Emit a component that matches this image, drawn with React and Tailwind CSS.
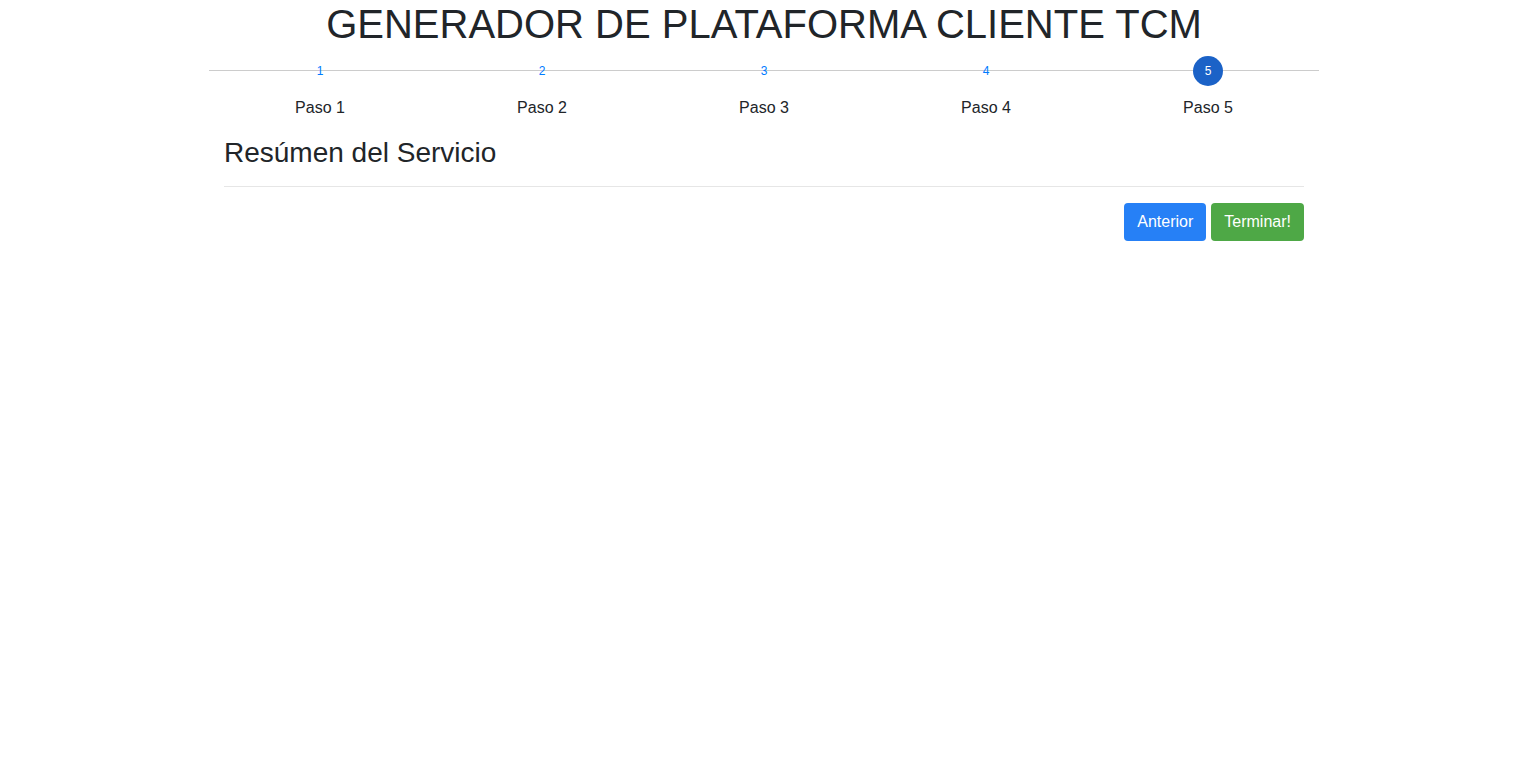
import React from "react";

const steps = [1, 2, 3, 4, 5];

export default function App() {
  return (
    <div className="min-h-screen bg-white text-[#212529]" style={{ fontFamily: '"Liberation Sans", Arial, sans-serif' }}>
      <div className="mx-auto w-[1110px]">
        <h1 className="text-center text-[40px] leading-[48px] font-normal text-[#212529]">
          GENERADOR DE PLATAFORMA CLIENTE TCM
        </h1>
        <div className="relative mt-[8px]">
          <div className="absolute left-0 right-0 top-[14px] h-px bg-[#cccccc]" />
          <div className="relative grid grid-cols-5">
            {steps.map((n) => (
              <div key={n} className="flex flex-col items-center">
                {n === 5 ? (
                  <div className="flex h-[30px] w-[30px] items-center justify-center rounded-full bg-[#1b62c7] text-[12px] text-white">
                    {n}
                  </div>
                ) : (
                  <div className="flex h-[30px] w-[30px] items-center justify-center text-[12px] text-[#007bff]">
                    {n}
                  </div>
                )}
                <div className="mt-[10px] text-[16px] leading-[24px] text-[#212529]">Paso {n}</div>
              </div>
            ))}
          </div>
        </div>
        <div className="px-[15px]">
          <h3 className="mt-[16px] text-[28px] leading-[34px] font-normal text-[#212529]">Resúmen del Servicio</h3>
          <hr className="mt-[16px] border-t border-[#e6e6e6]" />
          <div className="mt-[16px] flex justify-end gap-[5px]">
            <button className="h-[38px] rounded-[4px] bg-[#2680f6] px-[13px] text-[16px] text-white">Anterior</button>
            <button className="h-[38px] rounded-[4px] bg-[#4ea846] px-[13px] text-[16px] text-white">Terminar!</button>
          </div>
        </div>
      </div>
    </div>
  );
}
